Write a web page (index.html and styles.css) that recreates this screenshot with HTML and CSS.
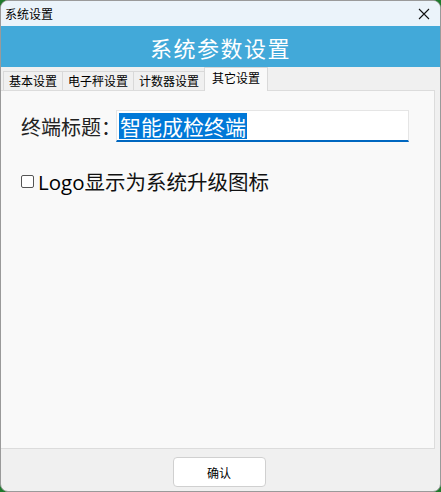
FILE: index.html
```html
<!DOCTYPE html>
<html>
<head>
<meta charset="utf-8">
<link rel="stylesheet" href="styles.css">
</head>
<body>
<div class="window">
  <div class="titlebar">
    <span class="title">系统设置</span>
    <svg class="close" width="12" height="12" viewBox="0 0 12 12"><path d="M1 1L11 11M11 1L1 11" stroke="#111" stroke-width="1.1" fill="none"/></svg>
  </div>
  <div class="banner">系统参数设置</div>
  <div class="tabs">
    <div class="tab">基本设置</div>
    <div class="tab">电子秤设置</div>
    <div class="tab">计数器设置</div>
    <div class="tab active">其它设置</div>
  </div>
  <div class="pane">
    <div class="row">
      <span class="label">终端标题：</span>
      <div class="input"><span class="sel">智能成检终端</span></div>
    </div>
    <div class="check-row">
      <span class="box"></span>
      <span class="check-label"><span class="latin">Logo</span>显示为系统升级图标</span>
    </div>
  </div>
  <div class="footer">
    <div class="btn">确认</div>
  </div>
</div>
</body>
</html>
```
FILE: styles.css
```css
html, body {
  margin: 0;
  padding: 0;
  background: #1e7a2c;
}
body {
  width: 441px;
  height: 492px;
  overflow: hidden;
  font-family: "Noto Sans CJK SC", sans-serif;
}
.window {
  width: 441px;
  height: 492px;
  box-sizing: border-box;
  border: 1px solid #9a9a9a;
  border-radius: 8px 8px 8px 8px;
  background: #f0f0f0;
  overflow: hidden;
  display: flex;
  flex-direction: column;
}
.titlebar {
  height: 25px;
  background: #ebf3fa;
  display: flex;
  align-items: center;
  justify-content: space-between;
  padding: 0 10px 0 4px;
}
.title {
  font-size: 12px;
  color: #000;
  line-height: 14px;
}
.close {
  display: block;
}
.banner {
  height: 41px;
  background: #42a9d9;
  color: #fff;
  font-size: 22px;
  display: flex;
  align-items: center;
  justify-content: center;
  letter-spacing: 1.5px;
}
.tabs {
  display: flex;
  align-items: flex-end;
  height: 23px;
  padding-left: 2px;
  background: #f0f0f0;
}
.tab {
  height: 19px;
  box-sizing: border-box;
  padding: 0 5px;
  border: 1px solid #d9d9d9;
  border-bottom: none;
  margin-right: -1px;
  background: #f0f0f0;
  font-size: 12px;
  line-height: 18px;
  color: #000;
}
.tab.active {
  background: #f9f9f9;
  padding: 0 7px;
  line-height: 20px;
  position: relative;
  z-index: 1;
  margin-bottom: -1px;
  height: 24px;
}
.pane {
  flex: 1;
  margin: 0 5px 0 0;
  background: #f9f9f9;
  border: 1px solid #dcdcdc;
  border-left: none;
  padding: 19px 0 0 20px;
}
.row {
  display: flex;
  align-items: center;
}
.label {
  font-size: 20px;
  color: #222;
  width: 95px;
  white-space: nowrap;
  flex: none;
}
.input {
  width: 293px;
  height: 32px;
  box-sizing: border-box;
  background: #fff;
  border: 1px solid #e5e5e5;
  border-bottom: 2px solid #0067c0;
  padding: 2px 0 0 2px;
  display: flex;
  align-items: flex-start;
  position: relative;
}
.sel {
  background: #0078d7;
  color: #fff;
  font-size: 21px;
  line-height: 26px;
  padding: 0 1px;
}
.check-row {
  display: flex;
  align-items: center;
  margin-top: 24px;
}
.box {
  width: 11px;
  height: 11px;
  border: 1px solid #555;
  border-radius: 2px;
  background: #fff;
  margin-right: 4px;
}
.check-label {
  font-size: 20.5px;
  color: #111;
}
.latin {
  font-family: "Open Sans", sans-serif;
  font-weight: 500;
  color: #000;
}
.footer {
  height: 42px;
  display: flex;
  justify-content: center;
  align-items: flex-start;
  padding-top: 8px;
  box-sizing: border-box;
}
.btn {
  width: 93px;
  height: 30px;
  box-sizing: border-box;
  background: #fff;
  border: 1px solid #d0d0d0;
  border-radius: 4px;
  font-size: 12px;
  display: flex;
  align-items: center;
  justify-content: center;
  margin-right: 3px;
}
```
